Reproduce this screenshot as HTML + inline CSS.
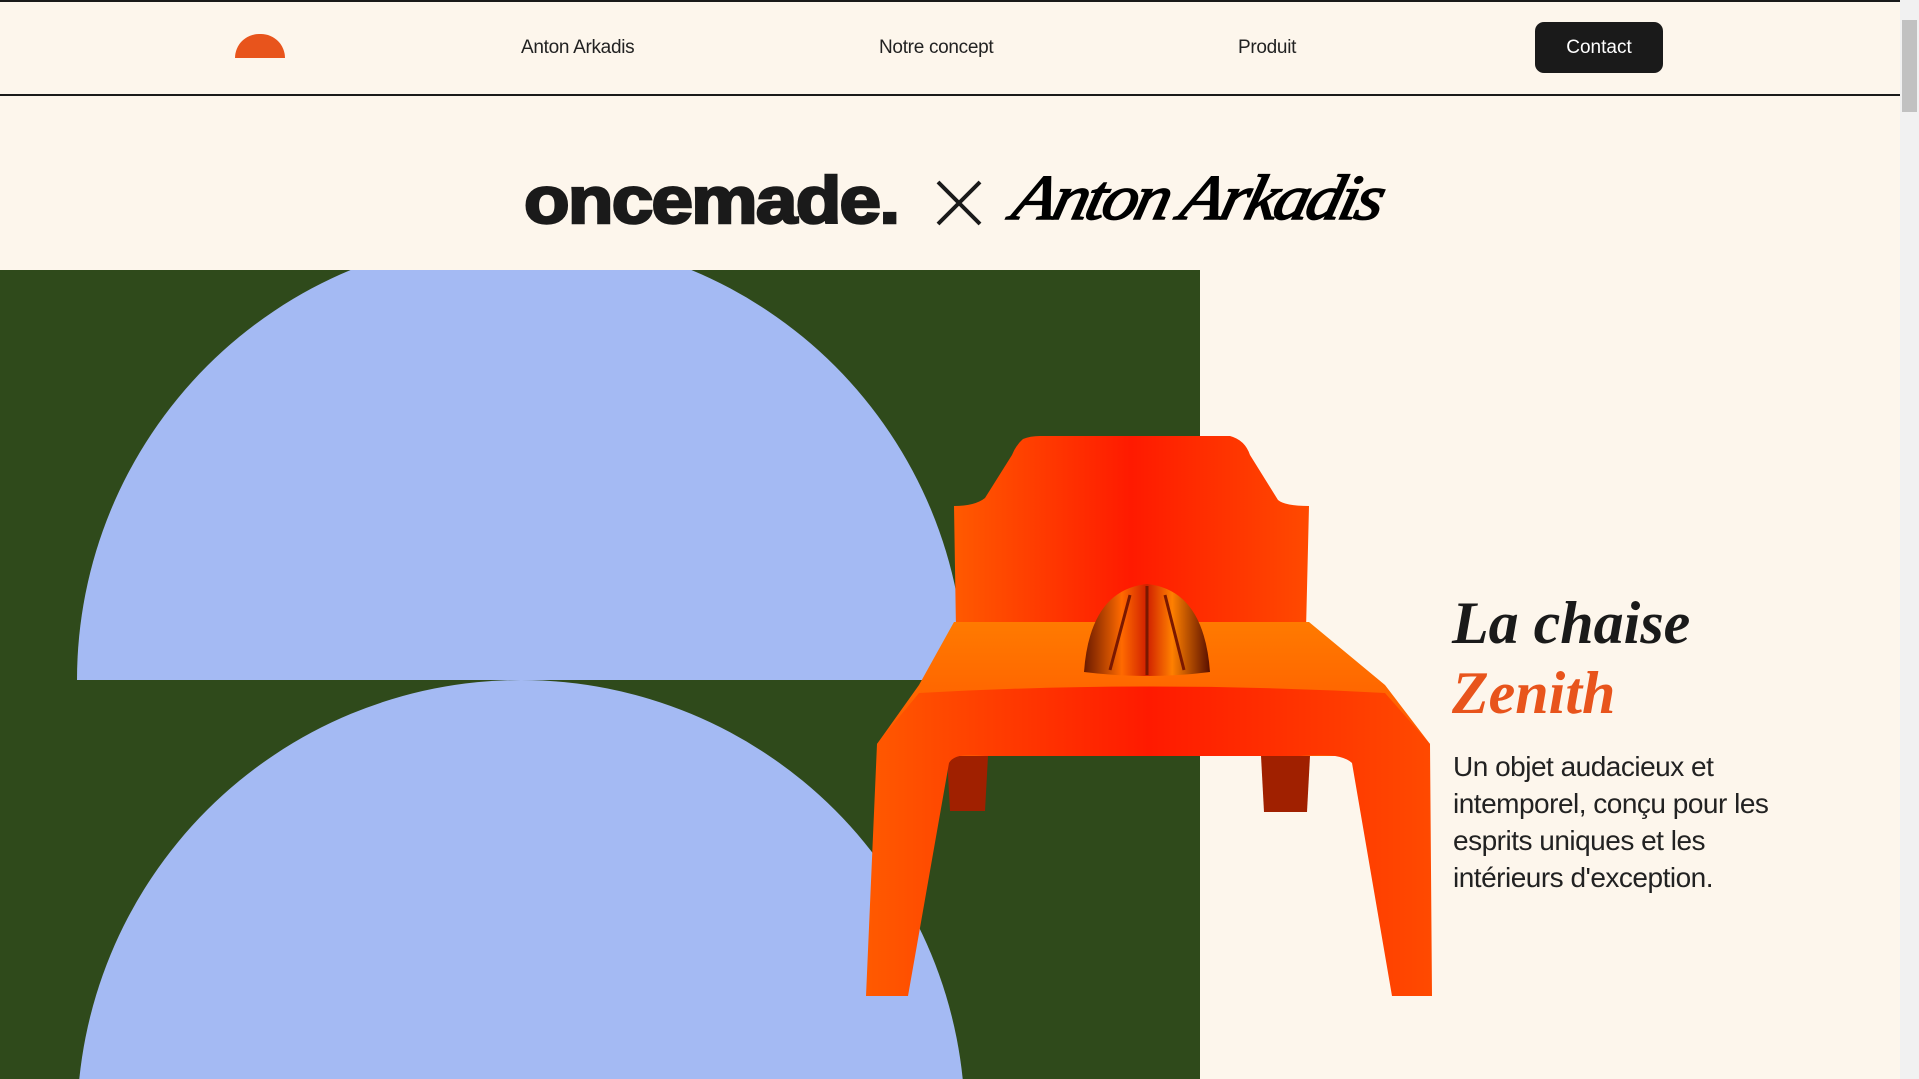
<!DOCTYPE html>
<html style="overflow:hidden"><head><meta charset="utf-8">
<style>
html,body{margin:0;padding:0}
body{width:1919px;height:1079px;overflow:hidden;background:#fdf6ec;position:relative;font-family:"Liberation Sans",sans-serif}
.abs{position:absolute}
.nav{font-size:19px;color:#222;top:37px;white-space:nowrap;letter-spacing:-0.3px}
</style></head><body>
<div class="abs" style="left:0;top:0;width:1900px;height:2px;background:#1a1a1a"></div>
<div class="abs" style="left:0;top:94px;width:1900px;height:2px;background:#1a1a1a"></div>
<div class="abs" style="left:235px;top:34px;width:50px;height:24px;background:#e8541c;border-radius:25px 25px 0 0"></div>
<div class="abs nav" style="left:521px">Anton Arkadis</div>
<div class="abs nav" style="left:879px">Notre concept</div>
<div class="abs nav" style="left:1238px">Produit</div>
<div class="abs" style="left:1535px;top:22px;width:128px;height:51px;background:#1a1a1a;border-radius:9px;color:#fff;font-size:19px;line-height:51px;text-align:center">Contact</div>
<div class="abs" style="left:1900px;top:0;width:19px;height:1079px;background:#f1f1f1"></div>
<div class="abs" style="left:1902px;top:20px;width:15px;height:92px;background:#c1c1c1"></div>
<div class="abs" style="left:524px;top:160px;font-size:66px;font-weight:bold;color:#1a1a1a;letter-spacing:-1.5px;-webkit-text-stroke:2.5px #1a1a1a;transform:scaleX(1.13);transform-origin:left top;line-height:80px">oncemade.</div>
<svg class="abs" style="left:935px;top:180px" width="48" height="46"><path d="M3 2 L45 44 M45 2 L3 44" stroke="#1a1a1a" stroke-width="4"/></svg>
<div class="abs" style="left:1024px;top:158px;font-family:'Liberation Serif',serif;font-style:italic;font-size:64px;color:#000;letter-spacing:-3px;-webkit-text-stroke:1.5px #000;transform:scaleX(1.12) skewX(-12deg);transform-origin:left top;line-height:80px">Anton Arkadis</div>
<svg class="abs" style="left:0;top:0" width="1900" height="1079">
<defs>
<clipPath id="g"><rect x="0" y="270" width="1200" height="809"/></clipPath>
<linearGradient id="r" x1="0" y1="0" x2="1" y2="0"><stop offset="0" stop-color="#ff5a00"/><stop offset=".5" stop-color="#ff1a00"/><stop offset="1" stop-color="#ff4a00"/></linearGradient>
<linearGradient id="s" x1="0" y1="0" x2="0" y2="1"><stop offset="0" stop-color="#ff7a00"/><stop offset="1" stop-color="#ff5500"/></linearGradient>
<linearGradient id="d" x1="0" y1="0" x2="1" y2="0"><stop offset="0" stop-color="#6a1a00"/><stop offset=".3" stop-color="#ff6a00"/><stop offset=".5" stop-color="#d02000"/><stop offset=".7" stop-color="#ff8000"/><stop offset="1" stop-color="#5a1000"/></linearGradient>
</defs>
<rect x="0" y="270" width="1200" height="809" fill="#2f4a1b"/>
<g clip-path="url(#g)" fill="#a4baf3">
<path d="M77 680 A444 444 0 0 1 965 680 Z"/>
<circle cx="521" cy="1124" r="444"/>
</g>
<path d="M947 756 L988 756 L985 811 L950 811 Z" fill="#a02000"/>
<path d="M1261 756 L1310 756 L1307 812 L1264 812 Z" fill="#a02000"/>
<path d="M1023 439 Q1030 436 1040 436 L1230 436 Q1245 440 1250 455 L1278 500 Q1285 506 1309 506 L1306 630 L956 630 L954 506 Q975 506 985 498 L1012 455 Q1016 445 1023 439 Z" fill="url(#r)"/>
<path d="M954 622 L1309 622 L1385 685 L1430 744 L1430 756 L877 756 L877 744 L919 685 Z" fill="url(#s)"/>
<path d="M919 693 Q1150 680 1385 693 L1430 744 L1432 996 L1392 996 L1352 763 Q1340 752 1300 756 L985 756 Q955 752 949 763 L908 996 L866 996 L877 744 Z" fill="url(#r)"/>
<path d="M1084 672 Q1090 590 1147 584 Q1204 590 1210 672 Q1147 680 1084 672 Z" fill="url(#d)"/>
<path d="M1110 670 L1130 595 M1147 675 L1147 586 M1184 670 L1165 595" stroke="#7a1800" stroke-width="3" fill="none"/>
</svg>
<div class="abs" style="left:1452px;top:588px;font-family:'Liberation Serif',serif;font-style:italic;font-weight:bold;font-size:60px;line-height:70px;color:#1a1a1a">La chaise<br><span style="color:#e8541c">Zenith</span></div>
<div class="abs" style="left:1453px;top:748px;font-size:28px;line-height:37px;color:#222;width:360px;letter-spacing:-0.5px">Un objet audacieux et intemporel, conçu pour les esprits uniques et les intérieurs d'exception.</div>
</body></html>
